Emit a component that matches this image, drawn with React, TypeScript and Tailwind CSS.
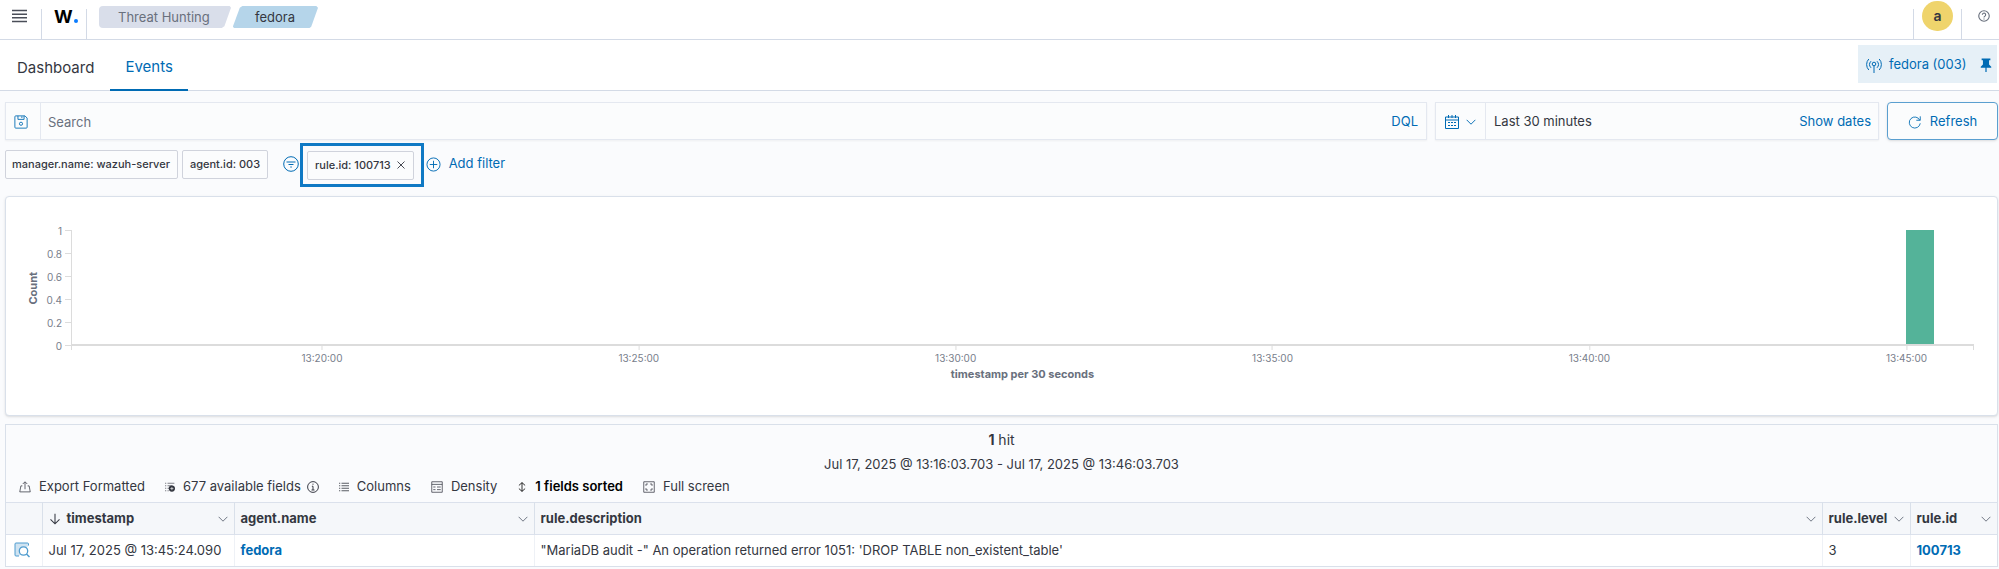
import type { ReactNode } from "react";

interface Column {
  name: string;
  width: string;
}

interface Tick {
  label: string;
  left: number;
}

const COLUMNS: Column[] = [
  { name: "timestamp", width: "w-[192px]" },
  { name: "agent.name", width: "w-[300px]" },
  { name: "rule.description", width: "" },
  { name: "rule.level", width: "w-[88px]" },
  { name: "rule.id", width: "w-[87px]" },
];

const Y_TICKS = ["1", "0.8", "0.6", "0.4", "0.2", "0"];

// left is a percentage of the plot width
const X_TICKS: Tick[] = [
  { label: "13:20:00", left: 13.14 },
  { label: "13:25:00", left: 29.8 },
  { label: "13:30:00", left: 46.46 },
  { label: "13:35:00", left: 63.12 },
  { label: "13:40:00", left: 79.78 },
  { label: "13:45:00", left: 96.45 },
];

const BARS = [{ left: 96.45, width: 1.45, value: 1 }];

function Icon({ children, className = "w-4 h-4" }: { children: ReactNode; className?: string }) {
  return (
    <svg viewBox="0 0 16 16" className={`shrink-0 ${className}`} fill="none" stroke="currentColor" aria-hidden="true">
      {children}
    </svg>
  );
}

function Chevron({ className = "w-[10px] h-[10px]" }: { className?: string }) {
  return (
    <Icon className={className}>
      <path d="M1 4.5l7 7 7-7" strokeWidth="1.5" />
    </Icon>
  );
}

function Header() {
  return (
    <header className="flex h-10 items-stretch border-b border-[#d3dae6] bg-white">
      <button aria-label="Menu" className="flex w-[41px] items-start pt-[9px] pl-3 text-[#4a4e58]">
        <svg viewBox="0 0 15 14" className="w-[15px] h-[14px]" fill="none" stroke="currentColor" strokeWidth="1.6">
          <path d="M0 1.5h15M0 5.2h15M0 8.8h15M0 12.5h15" />
        </svg>
      </button>
      <a href="#" aria-label="Home" className="mt-[9px] flex w-[46px] items-start gap-px border-x border-[#d3dae6] pl-3 text-lg leading-[15px] font-bold text-black">
        W
        <svg viewBox="0 0 4 4" className="mt-[10px] w-1 h-1" aria-hidden="true">
          <circle cx="2" cy="2" r="2" fill="#0a7cff" />
        </svg>
      </a>
      <nav className="flex items-start gap-[2px] pt-[6px] pl-3 text-[13px] leading-[22px]">
        <a href="#" className="h-[22px] w-[132px] rounded-l bg-[#d9deea] pl-[19px] text-[#69707d] [clip-path:polygon(0_0,99%_0,100%_8%,95%_92%,93%_100%,0_100%)]">
          Threat Hunting
        </a>
        <a href="#" className="h-[22px] w-[85px] bg-[#b5d5ea] pl-[22px] text-[#343741] [clip-path:polygon(11%_0,98%_0,100%_8%,92%_94%,90%_100%,1%_100%,0_92%,8%_8%)]">
          fedora
        </a>
      </nav>
      <div className="mt-[9px] ml-auto flex border-l border-[#d3dae6]">
        <button aria-label="Account" className="-mt-2 flex h-[38px] w-[47px] items-start pl-2">
          <span className="flex h-[30px] w-[31px] items-center justify-center rounded-full bg-[#efd46c] text-sm font-semibold text-[#343741]">
            a
          </span>
        </button>
        <button aria-label="Help" className="flex w-[38px] justify-center border-l border-[#d3dae6] pt-px pl-[6px] text-[#69707d]">
          <Icon className="w-3 h-3">
            <circle cx="8" cy="8" r="7" strokeWidth="1.5" />
            <path d="M5.8 6.4a2.2 2.2 0 1 1 3.4 1.8Q8 8.8 8 10" strokeWidth="1.5" />
            <path d="M8 11.2v1.6" strokeWidth="1.5" />
          </Icon>
        </button>
      </div>
    </header>
  );
}

function Tabs() {
  return (
    <div className="flex h-[51px] items-stretch border-b border-[#d3dae6] bg-white pl-1">
      <nav className="flex flex-1 text-[15px]">
        <a href="#" className="flex items-center px-[13px] pt-[6px] text-[#343741]">Dashboard</a>
        <a href="#" aria-current="page" className="ml-[3px] -mb-px flex items-center border-b-2 border-[#006bb4] px-[15px] pt-[6px] text-[#006bb4]">
          Events
        </a>
      </nav>
      <button className="mt-[5px] mr-[2px] flex h-[38px] w-[139px] items-center bg-[#e6f0f7] pt-px pl-2 text-[13px] text-[#006bb4]">
        <Icon>
          <path d="M5 4.2a4.8 4.8 0 0 0 0 6.6M11 4.2a4.8 4.8 0 0 1 0 6.6M2.8 2a8 8 0 0 0 0 11M13.2 2a8 8 0 0 1 0 11" />
          <circle cx="8" cy="7" r="1.8" />
          <path d="M8 8.8V16" />
        </Icon>
        <span className="ml-[7px]">fedora (003)</span>
        <Icon className="mr-1 ml-auto w-[14px] h-[14px]">
          <path d="M3 .5h10v2h-1.5v5L14 10v1H2v-1l2.500-2.500v-5H3zM7.300 11h1.400v5H7.300z" fill="currentColor" stroke="none" />
        </Icon>
      </button>
    </div>
  );
}

function SearchBar() {
  return (
    <div className="flex h-[38px] gap-2 text-[13px]">
      <div className="flex flex-1 items-stretch border border-[#e4e8f0] bg-[#fbfcfd] shadow-xs">
        <button aria-label="Saved queries" className="flex w-[35px] items-center border-r border-[#e4e8f0] pt-px pl-2 text-[#006bb4]">
          <Icon className="w-[14px] h-[14px]">
            <path d="M1 2a1 1 0 0 1 1-1h10.500L15 3.500V14a1 1 0 0 1-1 1H2a1 1 0 0 1-1-1zM4.500 1v4h7V1M9 1.500v2" />
            <circle cx="8" cy="10" r="1.800" />
          </Icon>
        </button>
        <input aria-label="Search" placeholder="Search" className="flex-1 px-[7px] pt-1 text-[#343741] outline-none placeholder:text-[#69707d]" />
        <button className="px-2 pt-[2px] text-[#006bb4]">DQL</button>
      </div>
      <div className="flex w-[444px] items-stretch border border-[#e4e8f0] bg-[#fbfcfd] shadow-xs">
        <button aria-label="Quick select" className="flex w-[50px] items-center border-r border-[#e4e8f0] pt-px pl-2 text-[#006bb4]">
          <Icon>
            <path d="M1.500 3h13v11.500h-13zM1.500 6h13M4.500 1v3M8 1v3M11.500 1v3" />
            <path d="M4 8.500h8M4 11.500h8" strokeDasharray="2 1" />
          </Icon>
          <Chevron className="ml-[6px] w-[10px] h-[10px]" />
        </button>
        <button className="flex-1 pt-[2px] pl-2 text-left text-[#343741]">Last 30 minutes</button>
        <button className="px-[7px] pt-[2px] text-[#006bb4]">Show dates</button>
      </div>
      <button className="flex w-[111px] items-center justify-center gap-2 rounded border border-[#5a9fd0] bg-[#fbfcfd] pt-px text-[#006bb4] shadow-sm">
        <Icon className="w-[14px] h-[14px]">
          <path d="M13.500 6A6.300 6.300 0 1 0 14 9.500M14 1.500V6H9.500" />
        </Icon>
        Refresh
      </button>
    </div>
  );
}

function Filters() {
  return (
    <div className="mt-[3px] flex h-[44px] items-center text-[11px] font-medium text-[#343741]">
      <span className="mb-[2px] flex h-[29px] items-center rounded-xs border border-[#d0d3dc] bg-[#fbfcfd] pr-[7px] pl-[6px]">manager.name: wazuh-server</span>
      <span className="mb-[2px] ml-1 flex h-[29px] items-center rounded-xs border border-[#d0d3dc] bg-[#fbfcfd] px-[7px]">agent.id: 003</span>
      <button aria-label="Filter options" className="mb-[2px] ml-[15px] text-[#006bb4]">
        <Icon>
          <circle cx="8" cy="8" r="7.300" />
          <path d="M3.500 6h9M5.500 8.500h5M7.300 11h1.500" />
        </Icon>
      </button>
      <div className="ml-px flex h-[44px] items-center border-[3px] border-[#0f79c4] pr-[7px] pl-1">
        <span className="flex h-[29px] items-center rounded-xs border border-[#d0d3dc] bg-[#fbfcfd] pr-2 pl-[7px]">
          rule.id: 100713
          <button aria-label="Remove filter" className="ml-[6px]">
            <Icon className="w-2 h-2">
              <path d="M1 1l14 14M15 1L1 15" strokeWidth="1.800" />
            </Icon>
          </button>
        </span>
      </div>
      <button className="mb-[2px] ml-[2px] flex items-center gap-2 text-[13px] font-normal text-[#006bb4]">
        <Icon className="w-[15px] h-[15px]">
          <circle cx="8" cy="8" r="7" />
          <path d="M8 4v8M4 8h8" />
        </Icon>
        Add filter
      </button>
    </div>
  );
}

function Histogram() {
  return (
    <section className="mt-[9px] rounded border border-[#d9e0ea] bg-white pt-[33px] pr-[23px] pb-8 pl-[19px] shadow-sm">
      <div className="flex">
        <div className="flex h-[116px] w-4 items-center justify-center">
          <span className="-rotate-90 text-[11px] font-bold text-[#69707d]">Count</span>
        </div>
        <div className="flex h-[116px] w-[30px] flex-col justify-between text-[10px] leading-[0px] text-[#787e8b]">
          {Y_TICKS.map((tick) => (
            <div key={tick} className="flex h-px items-center justify-end gap-[3px]">
              {tick}
              <span className="h-px w-[6px] bg-[#dcdcdc]" />
            </div>
          ))}
        </div>
        <div className="relative h-[116px] flex-1 border-b-2 border-l border-[#dcdcdc]">
          {BARS.map((bar) => (
            <div
              key={bar.left}
              className="absolute bottom-0 bg-[#54b399]"
              style={{ left: `${bar.left}%`, width: `${bar.width}%`, height: `${bar.value * 100}%` }}
            />
          ))}
          <span className="absolute top-full -left-px h-[6px] w-px bg-[#dcdcdc]" />
          <span className="absolute top-full right-0 h-[6px] w-px bg-[#dcdcdc]" />
          {X_TICKS.map((tick) => (
            <div
              key={tick.label}
              className="absolute top-full flex -translate-x-1/2 flex-col items-center text-[10px] leading-4 text-[#787e8b]"
              style={{ left: `${tick.left}%` }}
            >
              <span className="h-[6px] w-px bg-[#dcdcdc]" />
              {tick.label}
            </div>
          ))}
        </div>
      </div>
      <div className="mt-[19px] pl-[46px] text-center text-[11px] leading-[18px] font-bold text-[#69707d]">timestamp per 30 seconds</div>
    </section>
  );
}

function Toolbar() {
  return (
    <div className="mb-px flex h-7 items-center gap-5 pl-[13px] text-[13px] text-[#343741]">
      <button className="flex items-center gap-2">
        <Icon className="w-3 h-3">
          <path d="M4.500 6.500h-2L1 14.500h14l-1.500-8h-2M8 11V1.500M5 4l3-3 3 3" />
        </Icon>
        Export Formatted
      </button>
      <button className="flex items-center gap-2">
        <Icon className="w-[10px] h-[10px]">
          <path d="M0 2h2M4 2h11M0 6h2M4 6h8M0 10h2M4 10h3M0 14h2M4 14h2" />
          <circle cx="11" cy="10.500" r="5" fill="currentColor" stroke="none" />
          <path d="M11 8v5M8.500 10.500h5" stroke="#fff" />
        </Icon>
        677 available fields
        <Icon className="-ml-[2px] w-3 h-3">
          <circle cx="8" cy="8" r="7.200" strokeWidth="1.300" />
          <path d="M8 3.500v1.500M6.500 7h1.500v5M6 12h4" strokeWidth="1.300" />
        </Icon>
      </button>
      <button className="flex items-center gap-2">
        <Icon className="w-[10px] h-[10px]">
          <path d="M0 2h2M4 2h12M0 6h2M4 6h12M0 10h2M4 10h12M0 14h2M4 14h12" strokeWidth="1.300" />
        </Icon>
        Columns
      </button>
      <button className="flex items-center gap-2">
        <Icon className="w-3 h-3">
          <path d="M1 1h14v14H1zM1 4.500h14M3 8h3M8 8h5M3 11.500h3M8 11.500h5" />
        </Icon>
        Density
      </button>
      <button className="flex items-center gap-2 font-semibold text-black">
        <Icon className="w-[10px] h-[10px]">
          <path d="M8 1v14M3 5.500L8 1l5 4.500M3 10.500L8 15l5-4.500" strokeWidth="1.300" />
        </Icon>
        1 fields sorted
      </button>
      <button className="flex items-center gap-2">
        <Icon className="w-3 h-3">
          <path d="M1 1h14v14H1zM4 6.500V4h2.500M9.500 4H12v2.500M12 9.500V12H9.500M6.500 12H4V9.500" />
        </Icon>
        Full screen
      </button>
    </div>
  );
}

function EventsTable() {
  return (
    <table className="w-full table-fixed border-collapse text-left text-[13px] text-[#343741]">
      <thead className="bg-[#f5f7fa]">
        <tr className="h-8 border-y border-[#dbe1ec]">
          <th className="w-9" aria-label="Inspect"></th>
          {COLUMNS.map((column, index) => (
            <th key={column.name} className={`border-l border-[#d9e0ea] pr-[6px] pl-[6px] font-bold ${column.width}`}>
              <div className="flex items-center">
                {index === 0 && (
                  <Icon className="mr-[6px] w-3 h-3">
                    <path d="M8 1v13M2 8.500l6 6 6-6" strokeWidth="1.400" />
                  </Icon>
                )}
                {column.name}
                <button aria-label={`${column.name} options`} className="ml-auto text-[#69707d]">
                  <Chevron />
                </button>
              </div>
            </th>
          ))}
        </tr>
      </thead>
      <tbody className="bg-white">
        <tr className="h-[31px]">
          <td>
            <button aria-label="Inspect document" className="ml-2 flex text-[#4f9ccf]">
              <Icon>
                <path d="M14.500 3.500V2a1 1 0 0 0-1-1H2a1 1 0 0 0-1 1v11a1 1 0 0 0 1 1h3" fill="#cfe3f1" />
                <circle cx="9.500" cy="9" r="4.200" strokeWidth="1.300" fill="#fff" />
                <path d="M12.500 12l3 3" strokeWidth="1.500" />
              </Icon>
            </button>
          </td>
          <td className="border-l border-[#eef1f6] px-[6px] whitespace-nowrap">Jul 17, 2025 @ 13:45:24.090</td>
          <td className="border-l border-[#eef1f6] px-[6px]">
            <a href="#" className="font-bold text-[#006bb4]">fedora</a>
          </td>
          <td className="border-l border-[#eef1f6] px-[6px]">"MariaDB audit -" An operation returned error 1051: 'DROP TABLE non_existent_table'</td>
          <td className="border-l border-[#eef1f6] px-[6px]">3</td>
          <td className="border-l border-[#eef1f6] px-[6px]">
            <a href="#" className="font-bold text-[#006bb4]">100713</a>
          </td>
        </tr>
      </tbody>
    </table>
  );
}

export default function App() {
  return (
    <div className="min-h-screen bg-[#fafbfd] font-['Inter',sans-serif] text-[#343741]">
      <Header />
      <Tabs />
      <main className="pt-[11px] pr-px pb-1 pl-[5px]">
        <SearchBar />
        <Filters />
        <Histogram />
        <section className="mt-2 border border-[#d9e0ea]">
          <div className="pt-1 text-center text-sm leading-[22px]">
            <span className="font-bold">1</span> hit
          </div>
          <div className="pt-1 text-center text-[13px] leading-[18px]">Jul 17, 2025 @ 13:16:03.703 - Jul 17, 2025 @ 13:46:03.703</div>
          <Toolbar />
          <EventsTable />
        </section>
      </main>
    </div>
  );
}
